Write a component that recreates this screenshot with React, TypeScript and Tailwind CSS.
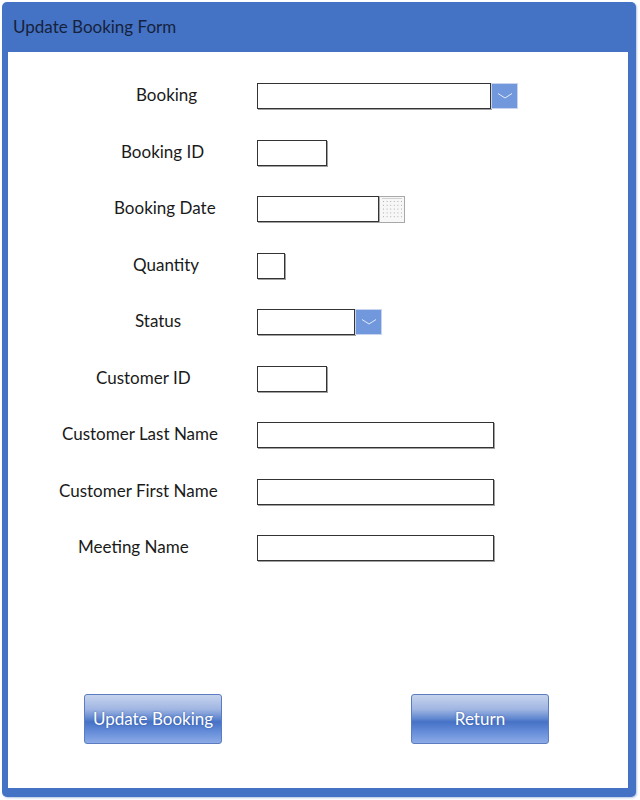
import React from 'react';

// Row definitions: label, left padding of the label inside the label column, field kind and width
type Field =
  | { kind: 'text'; width: number }
  | { kind: 'select'; width: number }
  | { kind: 'date'; width: number };

interface Row {
  label: string;
  pad: string;
  field: Field;
}

const rows: Row[] = [
  { label: 'Booking', pad: 'pl-[128px]', field: { kind: 'select', width: 234 } },
  { label: 'Booking ID', pad: 'pl-[113px]', field: { kind: 'text', width: 70 } },
  { label: 'Booking Date', pad: 'pl-[106px]', field: { kind: 'date', width: 122 } },
  { label: 'Quantity', pad: 'pl-[125px]', field: { kind: 'text', width: 28 } },
  { label: 'Status', pad: 'pl-[127px]', field: { kind: 'select', width: 98 } },
  { label: 'Customer ID', pad: 'pl-[88px]', field: { kind: 'text', width: 70 } },
  { label: 'Customer Last Name', pad: 'pl-[54px]', field: { kind: 'text', width: 237 } },
  { label: 'Customer First Name', pad: 'pl-[51px]', field: { kind: 'text', width: 237 } },
  { label: 'Meeting Name', pad: 'pl-[70px]', field: { kind: 'text', width: 237 } },
];

function DropButton() {
  return (
    <div className="h-[26px] w-[27px] border border-[#c9d5ee] bg-[#7197dc] flex items-center justify-center">
      <svg width="16" height="8" viewBox="0 0 16 8">
        <path d="M1 1.5 L8 6 L15 1.5" fill="none" stroke="#e4ecfa" strokeWidth="1" />
      </svg>
    </div>
  );
}

function CalendarButton() {
  const dots: React.ReactNode[] = [];
  for (let r = 0; r < 5; r++) {
    for (let c = 0; c < 6; c++) {
      dots.push(<rect key={`${r}-${c}`} x={3 + c * 3.6} y={4 + r * 3.8} width="1" height="1" fill="#b0b0b0" />);
    }
  }
  return (
    <div className="h-[27px] w-[26px] border border-[#a8a8a8] bg-[#f7f7f7]">
      <svg width="24" height="25" viewBox="0 0 24 25">
        <line x1="2" y1="1.5" x2="22" y2="1.5" stroke="#d0d0d0" strokeWidth="1" />
        {dots}
      </svg>
    </div>
  );
}

function FieldBox({ field }: { field: Field }) {
  const box = (
    <div
      className="h-[26px] border border-[#333333] bg-white shadow-[1px_1px_0_#a0a0a0]"
      style={{ width: field.width }}
    />
  );
  if (field.kind === 'select') {
    return (
      <div className="flex items-center">
        {box}
        <DropButton />
      </div>
    );
  }
  if (field.kind === 'date') {
    return (
      <div className="flex items-center">
        {box}
        <CalendarButton />
      </div>
    );
  }
  return box;
}

function GlossButton({ label }: { label: string }) {
  return (
    <div className="w-[138px] h-[50px] rounded-[3px] border border-[#5b7cc0] bg-[linear-gradient(to_bottom,#c6d3ec_0%,#9fb5e2_30%,#5d85cf_50%,#4672c6_56%,#6a91db_80%,#8dabe6_100%)] flex items-center justify-center text-white text-[17px] [text-shadow:0_0_2px_rgba(40,70,140,0.6)]">
      {label}
    </div>
  );
}

export default function App() {
  return (
    <div className="w-[640px] h-[800px] bg-white p-[2px] font-['Lato','Liberation_Sans',sans-serif]">
      <div className="w-[634px] h-[795px] rounded-[5px] bg-[#4472c4] flex flex-col shadow-[1px_1px_2px_rgba(68,114,196,0.4)]">
        {/* Title bar */}
        <div className="h-[50px] flex items-center pl-[11px] text-[17px] text-[#16223d]">
          Update Booking Form
        </div>

        {/* Form body */}
        <div className="flex-1 ml-[6px] mr-[8px] mb-[9px] bg-white flex flex-col">
          <div className="pt-[31px] flex flex-col gap-[30.5px]">
            {rows.map((row) => (
              <div key={row.label} className="flex items-center h-[26px]">
                <div className={`w-[249px] shrink-0 text-[17px] leading-[20px] text-[#1a1a1a] -mt-[2px] ${row.pad}`}>
                  {row.label}
                </div>
                <FieldBox field={row.field} />
              </div>
            ))}
          </div>

          <div className="flex-1" />

          <div className="flex pl-[76px] pb-[44px] gap-[189px]">
            <GlossButton label="Update Booking" />
            <GlossButton label="Return" />
          </div>
        </div>
      </div>
    </div>
  );
}
